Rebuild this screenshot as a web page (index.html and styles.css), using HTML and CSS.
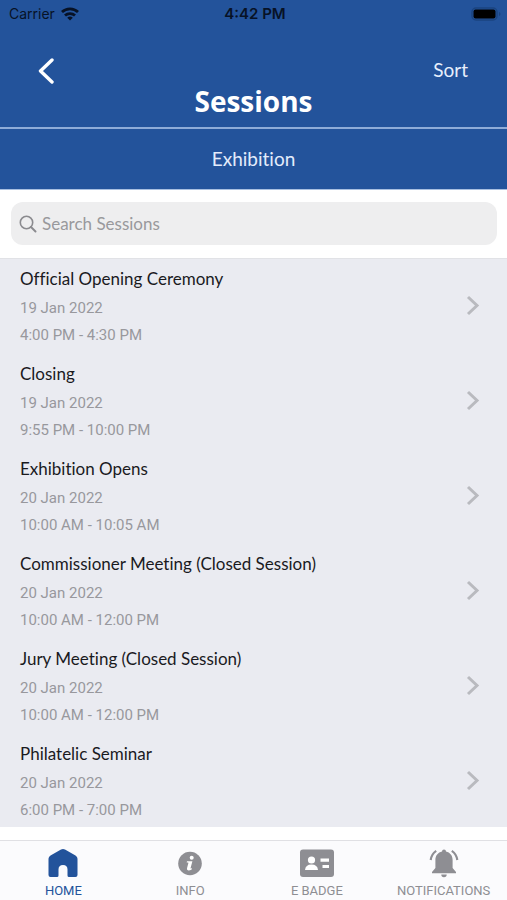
FILE: index.html
```html
<!DOCTYPE html>
<html lang="en">
<head>
<meta charset="utf-8">
<meta name="viewport" content="width=device-width, initial-scale=1">
<title>Sessions</title>
<link rel="stylesheet" href="styles.css">
</head>
<body>
<div class="app">
  <header class="header">
    <div class="status">
      <span class="carrier">Carrier
        <svg width="18" height="14" viewBox="0 0 18 14" aria-hidden="true"><g fill="none" stroke="currentColor" stroke-width="2.8"><path d="M1 5.100a11.500 11.500 0 0 1 16 0"/><path d="M4 8.600a7.200 7.200 0 0 1 10 0"/></g><path d="M9 13.600 6.200 10.800a4 4 0 0 1 5.600 0z" fill="currentColor"/></svg>
      </span>
      <span class="clock">4:42 PM</span>
      <svg class="battery" width="30" height="14" viewBox="0 0 30 14" aria-hidden="true"><rect x="1" y="1" width="25" height="12" rx="4" fill="none" stroke="#1b4480" stroke-width="1.5"/><rect x="2.500" y="2.500" width="22" height="9" rx="2" fill="#000"/><path d="M28 5v4q1.500-.5 1.500-2T28 5z" fill="#1b4480"/></svg>
    </div>
    <div class="nav">
      <button class="back" type="button" aria-label="Back"><svg width="18" height="28" viewBox="0 0 18 28" aria-hidden="true"><path d="M16 4 4.500 15 16 26" fill="none" stroke="#fff" stroke-width="3.400" stroke-linecap="round" stroke-linejoin="round"/></svg></button>
      <button class="sort" type="button">Sort</button>
    </div>
    <h1 class="title">Sessions</h1>
  </header>
  <h2 class="category">Exhibition</h2>
  <div class="search-area">
    <label class="search">
      <svg width="18" height="18" viewBox="0 0 18 18" fill="none" stroke="#8b8b8f" stroke-width="1.600" stroke-linecap="round" aria-hidden="true"><circle cx="7.500" cy="7.500" r="6.200"/><path d="m12 12 4.500 4.500" stroke-width="2"/></svg>
      <input type="search" placeholder="Search Sessions" aria-label="Search Sessions">
    </label>
  </div>
  <main class="list">
    <a class="session" href="#"><span class="details"><span class="name">Official Opening Ceremony</span><span class="date">19 Jan 2022</span><span class="time">4:00 PM - 4:30 PM</span></span><svg class="chevron" viewBox="0 0 14 20" aria-hidden="true"><path d="m3 0 9 8.500L3 17"/></svg></a>
    <a class="session" href="#"><span class="details"><span class="name">Closing</span><span class="date">19 Jan 2022</span><span class="time">9:55 PM - 10:00 PM</span></span><svg class="chevron" viewBox="0 0 14 20" aria-hidden="true"><path d="m3 0 9 8.500L3 17"/></svg></a>
    <a class="session" href="#"><span class="details"><span class="name">Exhibition Opens</span><span class="date">20 Jan 2022</span><span class="time">10:00 AM - 10:05 AM</span></span><svg class="chevron" viewBox="0 0 14 20" aria-hidden="true"><path d="m3 0 9 8.500L3 17"/></svg></a>
    <a class="session" href="#"><span class="details"><span class="name">Commissioner Meeting (Closed Session)</span><span class="date">20 Jan 2022</span><span class="time">10:00 AM - 12:00 PM</span></span><svg class="chevron" viewBox="0 0 14 20" aria-hidden="true"><path d="m3 0 9 8.500L3 17"/></svg></a>
    <a class="session" href="#"><span class="details"><span class="name">Jury Meeting (Closed Session)</span><span class="date">20 Jan 2022</span><span class="time">10:00 AM - 12:00 PM</span></span><svg class="chevron" viewBox="0 0 14 20" aria-hidden="true"><path d="m3 0 9 8.500L3 17"/></svg></a>
    <a class="session" href="#"><span class="details"><span class="name">Philatelic Seminar</span><span class="date">20 Jan 2022</span><span class="time">6:00 PM - 7:00 PM</span></span><svg class="chevron" viewBox="0 0 14 20" aria-hidden="true"><path d="m3 0 9 8.500L3 17"/></svg></a>
  </main>
  <nav class="tabs">
    <a class="tab active" href="#"><svg width="30" height="30" viewBox="0 0 30 30" aria-hidden="true"><path fill="currentColor" d="M15 1q1 0 2 .6l10.500 5.900q2 1.200 2 3.200v16.300q0 2-2 2h-6.500q-1.500 0-1.500-1.500V21.500q0-4.500-4.500-4.500t-4.500 4.500v6q0 1.500-1.500 1.500H2.500q-2 0-2-2V10.700q0-2 2-3.200L13 1.600q1-.6 2-.6z"/></svg>HOME</a>
    <a class="tab" href="#"><svg width="30" height="30" viewBox="0 0 30 30" aria-hidden="true"><circle cx="15" cy="15.500" r="11.800" fill="currentColor"/><circle cx="16.700" cy="9.800" r="2" fill="#fff"/><path d="M12 13.300h5.400l-1.800 6.600q-.1.700.5.500l.9-.3-.3 1.300q-1.700 1.100-3.300 1.100-1.900-.1-1.400-2.200l1.400-5.300q.2-.5-.4-.5H11.700z" fill="#fff"/></svg>INFO</a>
    <a class="tab" href="#"><svg width="36" height="30" viewBox="0 0 36 30" aria-hidden="true"><rect x="1" y="1.500" width="34" height="27.500" rx="3" fill="currentColor"/><g fill="#fff"><circle cx="12.500" cy="12" r="3.600"/><path d="M6 22q.5-5.500 6.500-5.500T19 22z"/><path d="M21.500 10.500H30v3.200h-8.500zM23.500 17H30v3h-6.500z"/></g></svg>E BADGE</a>
    <a class="tab" href="#"><svg width="30" height="30" viewBox="0 0 30 30" aria-hidden="true"><path fill="currentColor" d="M15 1.500a2 2 0 0 1 2 2c4 1 6.600 4 6.600 8.500V20l3.400 4v1.200H3V24l3.400-4v-8c0-4.500 2.600-7.500 6.600-8.500a2 2 0 0 1 2-2zM12.300 26.500h5.400a2.700 2.700 0 0 1-5.400 0z"/><path d="M7.200 2.800Q2.500 6 1.700 12M22.800 2.800Q27.500 6 28.300 12" fill="none" stroke="currentColor" stroke-width="2.200"/></svg>NOTIFICATIONS</a>
  </nav>
</div>
</body>
</html>
```

FILE: styles.css
```css
* { box-sizing: border-box; }
body {
  margin: 0;
  background: #fff;
  font-family: Lato, sans-serif;
  font-variant-ligatures: none;
}
button, input { font: inherit; border: 0; padding: 0; background: none; }
a { text-decoration: none; color: inherit; }
svg { display: block; flex: none; }
h1, h2 { margin: 0; }

.app { display: flex; flex-direction: column; min-height: 100vh; }

.header { background: #23539b; border-bottom: 2px solid #8eacd8; }
.status {
  display: grid;
  grid-template-columns: 1fr auto 1fr;
  align-items: center;
  height: 28px;
  padding: 0 6px 0 9px;
  font: 14px/20px Inter, sans-serif;
  color: #071226;
}
.carrier { display: flex; align-items: center; gap: 6px; }
.clock { font-size: 15px; font-weight: 600; }
.battery { justify-self: end; }
.nav {
  display: flex;
  justify-content: space-between;
  align-items: center;
  height: 56px;
  padding: 28px 39px 0 36px;
}
.back { height: 28px; }
.sort { font-size: 19px; line-height: 28px; color: #e8effc; }
.title {
  padding: 2px 0 10px;
  font-family: "Open Sans", sans-serif;
  font-size: 28px;
  line-height: 31px;
  font-weight: 700;
  text-align: center;
  color: #fff;
}
.category {
  background: #23539b;
  padding: 16px;
  font-size: 19px;
  line-height: 28px;
  font-weight: 400;
  text-align: center;
  color: #e3ecfb;
  border-bottom: 1px solid #a8bfe0;
}

.search-area { padding: 12px 10px 13px 11px; }
.search {
  display: flex;
  align-items: center;
  gap: 5px;
  height: 43px;
  padding: 0 8px;
  border-radius: 12px;
  background: #eeeeef;
}
.search input { flex: 1; min-width: 0; font-size: 17px; color: #222; outline: 0; }
.search input::placeholder { color: #99999c; opacity: 1; }

.list {
  display: flex;
  flex-direction: column;
  gap: 19px;
  padding: 10px 28px 7px 20px;
  background: #eaebf1;
  border-top: 1px solid #e1e2e6;
}
.session { display: flex; justify-content: space-between; align-items: center; }
.details { display: flex; flex-direction: column; line-height: 20px; }
.name { margin-bottom: 9px; font-size: 17px; color: #1a1a1e; }
.date, .time { font-family: Roboto, sans-serif; font-size: 15px; color: #98989d; }
.date { margin-bottom: 7px; }
.chevron { width: 14px; height: 20px; overflow: visible; fill: none; stroke: #b9babf; stroke-width: 3; }

.tabs {
  display: grid;
  grid-template-columns: repeat(4, 1fr);
  height: 60px;
  margin-top: auto;
  padding-top: 7px;
  border-top: 1px solid #e0e0e4;
  background: #fbfbfd;
}
.tab {
  display: flex;
  flex-direction: column;
  align-items: center;
  gap: 5px;
  font: 13px/16px Roboto, sans-serif;
  color: #8e8e93;
}
.tab.active { color: #23539b; }
```
